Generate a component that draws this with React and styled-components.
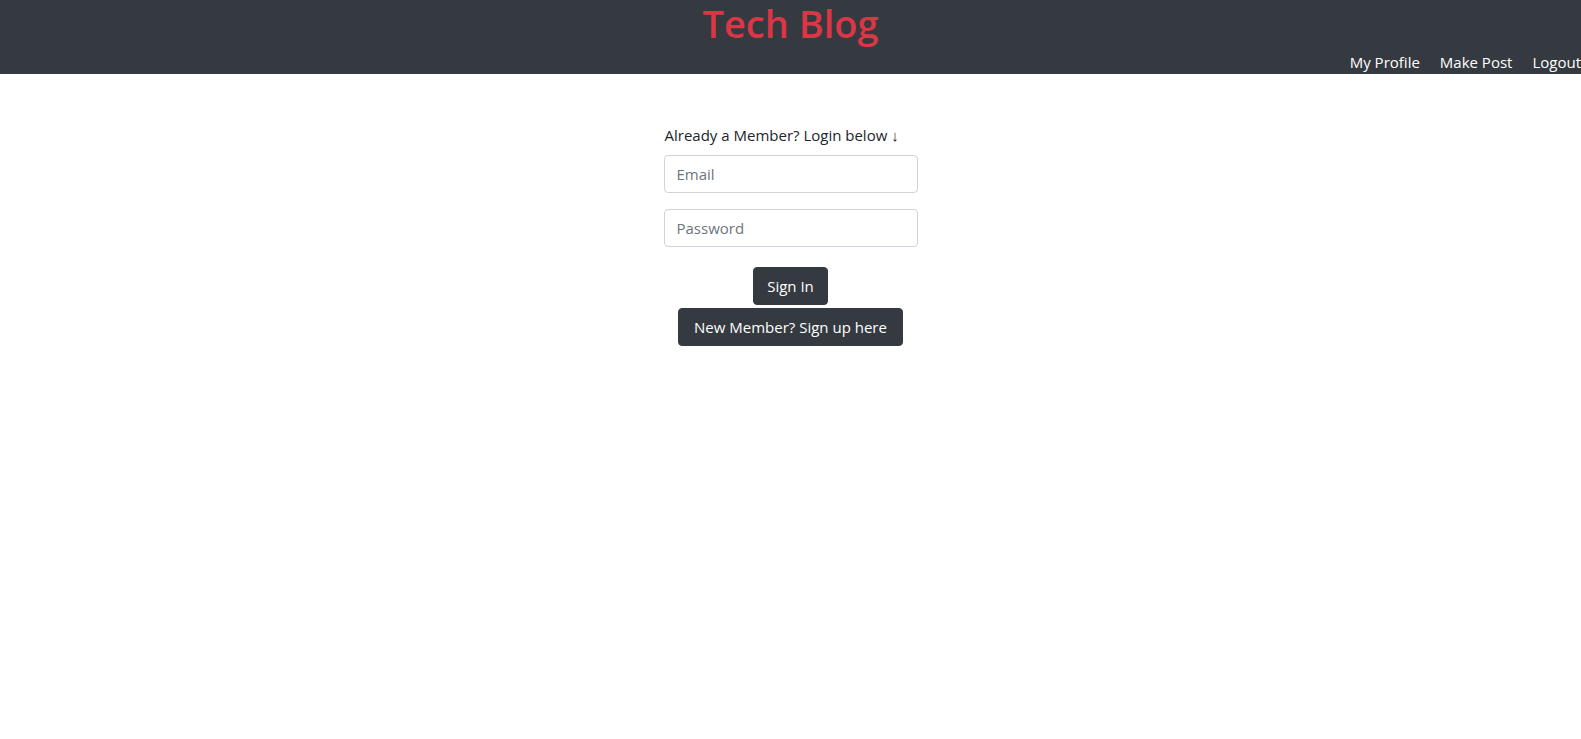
import React from "react";
import styled, { createGlobalStyle } from "styled-components";

const Global = createGlobalStyle`
  * { box-sizing: border-box; }
  body {
    margin: 0;
    font-family: "Open Sans", "Noto Sans", "Liberation Sans", sans-serif;
    font-size: 15px;
    color: #212529;
    background: #fff;
  }
`;

const Header = styled.header`
  background: #343a40;
  height: 74px;
  display: flex;
  flex-direction: column;
  overflow: hidden;
`;

const Title = styled.h1`
  margin: 0;
  padding-top: 2px;
  text-align: center;
  color: #dc3545;
  font-size: 38px;
  font-weight: 600;
  line-height: 42px;
`;

const Nav = styled.nav`
  display: flex;
  justify-content: flex-end;
  gap: 20px;
  padding-top: 6px;
`;

const NavLink = styled.a`
  color: #fff;
  text-decoration: none;
  font-size: 15px;
  line-height: 24px;
`;

const Main = styled.main`
  display: flex;
  justify-content: center;
  padding-top: 49px;
`;

const Form = styled.form`
  width: 254px;
  display: flex;
  flex-direction: column;
  align-items: center;
`;

const Prompt = styled.p`
  align-self: flex-start;
  margin: 0 0 8px 1px;
  line-height: 24px;
  font-size: 15px;
`;

const Input = styled.input`
  width: 100%;
  height: 38px;
  padding: 6px 12px;
  border: 1px solid #ced4da;
  border-radius: 4px;
  font-family: inherit;
  font-size: 15px;
  color: #495057;
  margin-bottom: ${(p) => p.$mb || 0}px;
  &::placeholder { color: #6c757d; }
`;

const Button = styled.button`
  background: #343a40;
  color: #fff;
  border: 1px solid #343a40;
  border-radius: 4px;
  height: 38px;
  padding: 0 ${(p) => p.$px || 12}px;
  font-family: inherit;
  font-size: 15px;
  margin-top: ${(p) => p.$mt || 0}px;
  cursor: pointer;
`;

export default function App() {
  return (
    <>
      <Global />
      <Header>
        <Title>Tech Blog</Title>
        <Nav>
          <NavLink href="#">My Profile</NavLink>
          <NavLink href="#">Make Post</NavLink>
          <NavLink href="#">Logout</NavLink>
        </Nav>
      </Header>
      <Main>
        <Form onSubmit={(e) => e.preventDefault()}>
          <Prompt>Already a Member? Login below ↓</Prompt>
          <Input type="email" placeholder="Email" $mb={16} />
          <Input type="password" placeholder="Password" />
          <Button type="submit" $mt={20} $px={13}>Sign In</Button>
          <Button type="button" $mt={3} $px={15}>New Member? Sign up here</Button>
        </Form>
      </Main>
    </>
  );
}
